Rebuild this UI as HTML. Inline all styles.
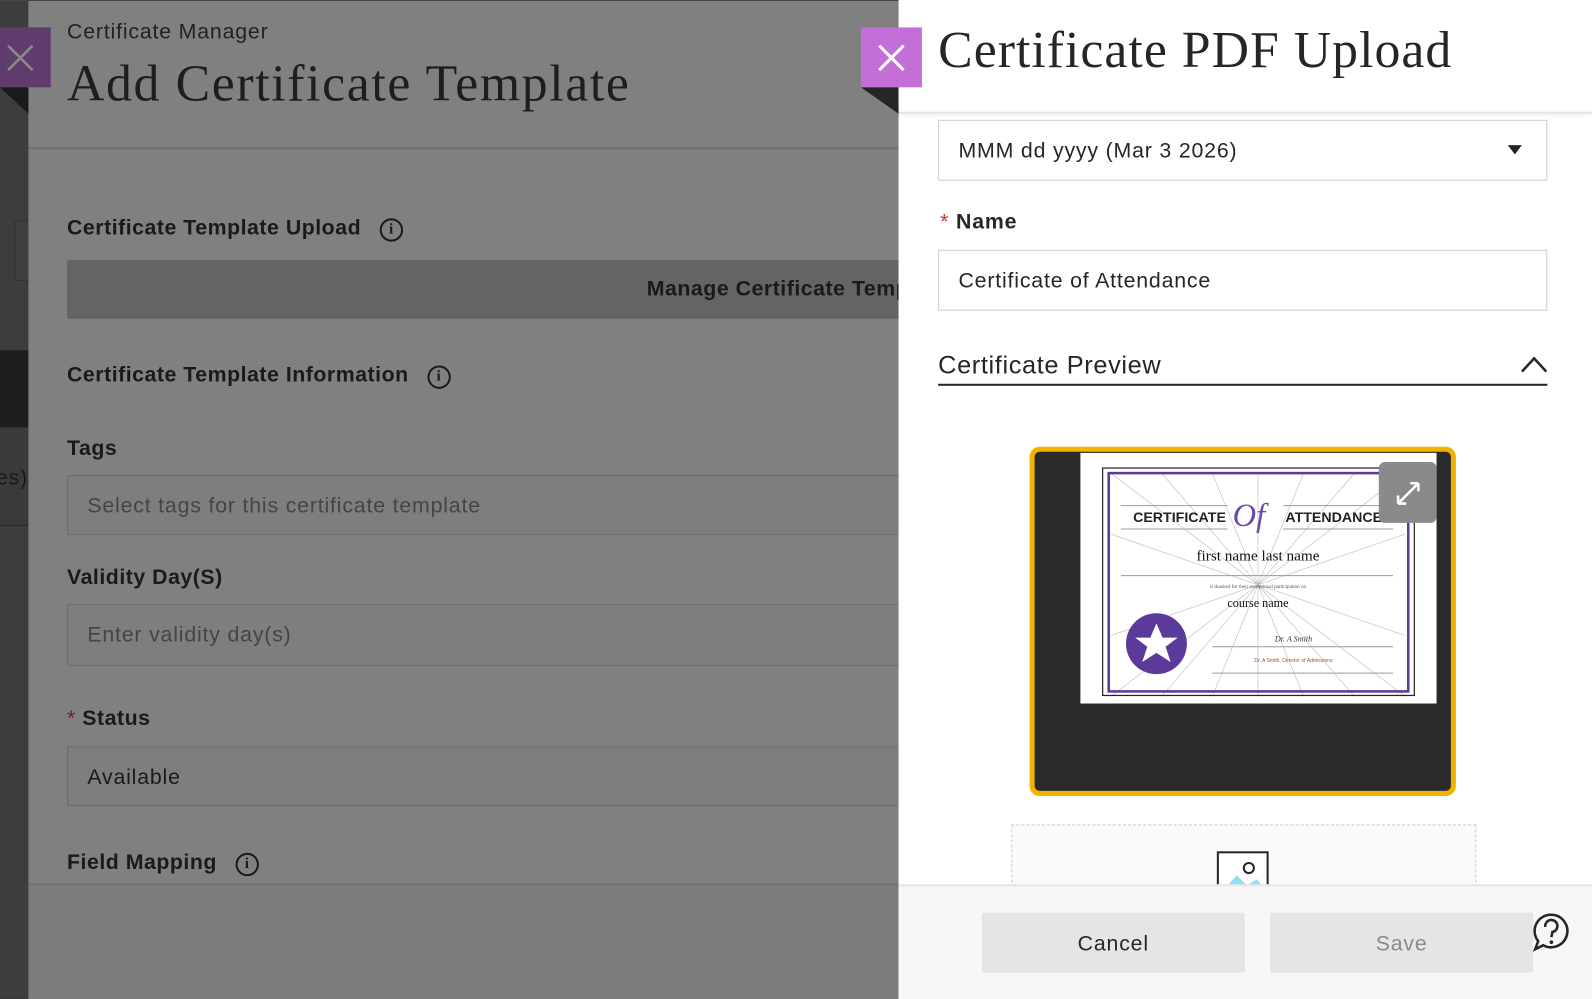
<!DOCTYPE html>
<html><head><meta charset="utf-8"><style>
html,body{margin:0;padding:0;width:1592px;height:997px;overflow:hidden;background:#3b3b3b}
#w{position:absolute;left:0;top:0;width:1568px;height:982px;transform:scale(1.01531,1.01527);transform-origin:0 0;font-family:"Liberation Sans",sans-serif;letter-spacing:.8px}
svg{letter-spacing:0}
.a{position:absolute}
.lbl{position:absolute;left:66px;font-size:21px;color:#1a1a1a;font-weight:bold;letter-spacing:.5px}
.inp{position:absolute;left:66px;width:900px;height:58px;border:1px solid #6c6c6c;background:#7e7e7e;border-radius:2px;box-sizing:border-box;font-size:21px;color:#454545;padding:18px 19px}
.info{display:inline-block;width:23px;height:23px;border:2.5px solid #1a1a1a;border-radius:50%;box-sizing:border-box;text-align:center;font:bold 15px/18px "Liberation Serif",serif;vertical-align:1px;margin-left:18px;letter-spacing:0}
.rin{position:absolute;left:924px;width:600px;height:60px;border:1px solid #cdcdcd;box-sizing:border-box;font-size:21px;color:#262626;padding:18px 19px;background:#fff}
.btn{position:absolute;top:899px;width:259px;height:59px;background:#e5e5e5;border-radius:2px;text-align:center;font-size:21px;line-height:61px}
</style></head><body><div id="w">
<div class="a" style="left:0;top:0;width:28px;height:982px;background:#3d3d3d"></div>
<div class="a" style="left:14px;top:217px;width:14px;height:58px;border:1px solid #2e2e2e;border-right:none;border-radius:3px 0 0 3px;background:#3f3f3f"></div>
<div class="a" style="left:0;top:345px;width:28px;height:76px;background:#1e1e1e"></div>
<div class="a" style="left:0;top:421px;width:28px;height:96px;background:#3a3a3a;border-bottom:1px solid #2a2a2a"></div>
<div class="a" style="left:-4px;top:459px;font-size:21px;color:#1a1a1a">es)</div>
<div class="a" style="left:28px;top:0;width:860px;height:982px;background:#808080"></div>
<div class="a" style="left:28px;top:0;width:860px;height:145px;background:#808080;border-bottom:2px solid #6e6e6e"></div>
<div class="a" style="left:0;top:0;width:1568px;height:1px;background:#444"></div>
<div class="a" style="left:28px;top:870px;width:860px;height:112px;background:#7c7c7c;border-top:2px solid #727272"></div>
<div class="a" style="left:0;top:27px;width:50px;height:59px;background:#5f3b6e"></div>
<svg class="a" style="left:6px;top:43px" width="28" height="28"><path d="M2 2L26 26M26 2L2 26" stroke="#8a8a8a" stroke-width="2.5"/></svg>
<div class="a" style="left:0;top:86px;width:0;height:0;border-top:26px solid #1a1a1a;border-left:28px solid transparent"></div>
<div class="a" style="left:66px;top:20px;font-size:21px;color:#222">Certificate Manager</div>
<div class="a" style="left:66px;top:54px;font-family:'Liberation Serif',serif;font-size:51px;color:#1e1e1e;letter-spacing:1.6px">Add Certificate Template</div>
<div class="lbl" style="top:213px">Certificate Template Upload<span class="info">i</span></div>
<div class="a" style="left:66px;top:256px;width:1390px;height:58px;background:#646464;border-radius:2px"></div>
<div class="a" style="left:637px;top:273px;font-size:21px;color:#1a1a1a;font-weight:bold;letter-spacing:.5px;white-space:nowrap">Manage Certificate Templates</div>
<div class="lbl" style="top:358px">Certificate Template Information<span class="info">i</span></div>
<div class="lbl" style="top:430px">Tags</div>
<div class="inp" style="top:468px;height:59px">Select tags for this certificate template</div>
<div class="lbl" style="top:557px">Validity Day(S)</div>
<div class="inp" style="top:595px;height:61px">Enter validity day(s)</div>
<div class="lbl" style="top:696px"><span style="color:#6a1f1f;font-weight:normal">*</span> Status</div>
<div class="inp" style="top:735px;height:59px;color:#1a1a1a">Available</div>
<div class="lbl" style="top:838px">Field Mapping<span class="info">i</span></div>
<div class="a" style="left:885px;top:0;width:683px;height:982px;background:#fff"></div>
<div class="a" style="left:885px;top:0;width:683px;height:110px;background:#fff;border-bottom:2px solid #e4e4e4;box-shadow:0 2px 4px rgba(0,0,0,.08)"></div>
<div class="a" style="left:848px;top:27px;width:60px;height:59px;background:#c46fd7"></div>
<svg class="a" style="left:864px;top:43px" width="28" height="28"><path d="M2 2L26 26M26 2L2 26" stroke="#fff" stroke-width="3"/></svg>
<div class="a" style="left:848px;top:86px;width:0;height:0;border-top:26px solid #262626;border-left:37px solid transparent"></div>
<div class="a" style="left:924px;top:21px;font-family:'Liberation Serif',serif;font-size:51px;color:#262626;letter-spacing:1px">Certificate PDF Upload</div>
<div class="rin" style="top:118px">MMM dd yyyy (Mar 3 2026)</div>
<div class="a" style="left:1485px;top:143px;width:0;height:0;border-left:7px solid transparent;border-right:7px solid transparent;border-top:9px solid #262626"></div>
<div class="a" style="left:926px;top:207px;font-size:21px;color:#262626;font-weight:bold"><span style="color:#c0392b;font-weight:normal">*</span> Name</div>
<div class="rin" style="top:246px">Certificate of Attendance</div>
<div class="a" style="left:924px;top:346px;font-size:25px;color:#262626;letter-spacing:.6px">Certificate Preview</div>
<div class="a" style="left:924px;top:378px;width:600px;height:2px;background:#262626"></div>
<svg class="a" style="left:1497px;top:350px" width="28" height="18"><path d="M2 16L14 3L26 16" stroke="#262626" stroke-width="2.5" fill="none"/></svg>
<div class="a" style="left:1014px;top:440px;width:420px;height:344px;box-sizing:border-box;border:5px solid #f2b300;border-radius:10px;background:#2a2a2a;overflow:hidden">
<svg class="a" style="left:45px;top:1px" width="351" height="247" viewBox="0 0 351 247">
<rect width="351" height="247" fill="#fff"/>
<g stroke="#bbb" stroke-width=".6">
<path d="M175 130L30 20M175 130L80 20M175 130L130 20M175 130L175 20M175 130L220 20M175 130L270 20M175 130L320 20M175 130L30 240M175 130L80 240M175 130L130 240M175 130L175 240M175 130L220 240M175 130L270 240M175 130L320 240M175 130L30 80M175 130L30 180M175 130L320 80M175 130L320 180"/></g>
<rect x="22" y="15" width="307" height="224" fill="none" stroke="#222" stroke-width="1.2"/>
<rect x="28" y="20" width="295" height="215" fill="none" stroke="#5b3a9a" stroke-width="2.5"/>
<line x1="40" y1="52" x2="145" y2="52" stroke="#999"/><line x1="200" y1="52" x2="308" y2="52" stroke="#999"/>
<line x1="40" y1="75" x2="145" y2="75" stroke="#999"/><line x1="200" y1="75" x2="308" y2="75" stroke="#999"/>
<text x="52" y="68" font-family="Liberation Sans" font-weight="bold" font-size="14" fill="#222">CERTIFICATE</text>
<text x="150" y="72" font-family="Liberation Serif" font-style="italic" font-size="32" fill="#6a4aa8">Of</text>
<text x="202" y="68" font-family="Liberation Sans" font-weight="bold" font-size="14" fill="#222">ATTENDANCE</text>
<text x="175" y="106" text-anchor="middle" font-family="Liberation Serif" font-size="15" fill="#111">first name last name</text>
<line x1="40" y1="121" x2="308" y2="121" stroke="#999"/>
<text x="175" y="133" text-anchor="middle" font-family="Liberation Serif" font-size="5" fill="#555">is thanked for their exceptional participation on</text>
<text x="175" y="152" text-anchor="middle" font-family="Liberation Serif" font-size="12" fill="#111">course name</text>
<circle cx="75" cy="188" r="30" fill="#5b3a9a"/>
<path d="M75 168L81 182L96 182L84 191L89 206L75 197L61 206L66 191L54 182L69 182Z" fill="#fff"/>
<text x="210" y="186" text-anchor="middle" font-family="Liberation Serif" font-style="italic" font-size="8" fill="#333">Dr. A Smith</text>
<line x1="130" y1="191" x2="308" y2="191" stroke="#999"/>
<text x="210" y="206" text-anchor="middle" font-size="5" fill="#a0522d">Dr. A Smith, Director of Admissions</text>
<line x1="130" y1="217" x2="308" y2="217" stroke="#999"/>
</svg>
<div class="a" style="left:339px;top:10px;width:57px;height:60px;background:#8a8a8a;border-radius:6px"></div>
<svg class="a" style="left:355px;top:28px" width="26" height="26"><path d="M3 23L23 3M3 23L3 15M3 23L11 23M23 3L15 3M23 3L23 11" stroke="#fff" stroke-width="2.5" fill="none"/></svg>
</div>
<div class="a" style="left:996px;top:812px;width:456px;height:70px;border:1px dashed #ccc;background:#fafafa"></div>
<svg class="a" style="left:1198px;top:838px" width="52" height="40"><rect x="1.5" y="1.5" width="49" height="40" fill="#fff" stroke="#262626" stroke-width="2"/><circle cx="32" cy="17" r="5" fill="#fff" stroke="#262626" stroke-width="2"/><path d="M6 40L20 24L30 34L40 28L50 40Z" fill="#8fe0f0"/></svg>
<div class="a" style="left:885px;top:871px;width:683px;height:111px;background:#f7f7f7;border-top:2px solid #e6e6e6"></div>
<div class="btn" style="left:967px;color:#262626">Cancel</div>
<div class="btn" style="left:1251px;color:#8a8a8a">Save</div>
<svg class="a" style="left:1508px;top:898px" width="40" height="40"><path d="M20 3A16 16 0 1 1 12 33L4 37L7 29A16 16 0 0 1 20 3Z" fill="none" stroke="#262626" stroke-width="2.5"/><path d="M14 15A6 6 0 1 1 21 20L20 25" fill="none" stroke="#262626" stroke-width="2.5"/><circle cx="20" cy="30" r="1.8" fill="#262626"/></svg>
</div></body></html>
